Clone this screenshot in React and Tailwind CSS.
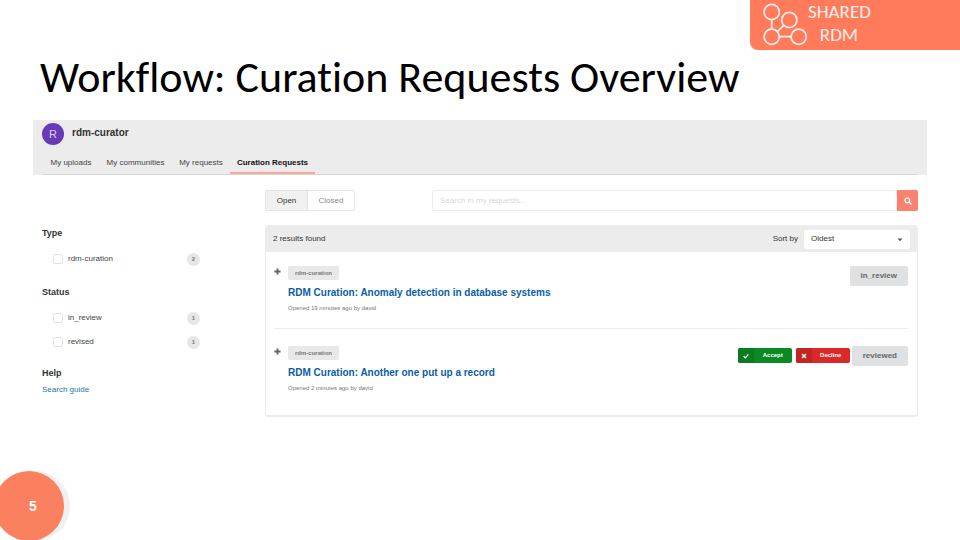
import React from "react";

const TABS = [
  { label: "My uploads", width: "w-14" },
  { label: "My communities", width: "w-[73px]" },
  { label: "My requests", width: "w-[58px]" },
  { label: "Curation Requests", width: "w-[85px]", active: true },
];

const REQUESTS = [
  {
    title: "RDM Curation: Anomaly detection in database systems",
    opened: "Opened 19 minutes ago by david",
    status: "in_review",
  },
  {
    title: "RDM Curation: Another one put up a record",
    opened: "Opened 2 minutes ago by david",
    status: "reviewed",
    actions: true,
  },
];

function Logo() {
  return (
    <div className="flex h-[50px] w-[210px] rounded-bl-lg bg-[#ff7b5c] pl-3 text-white">
      <svg viewBox="0 0 46 50" className="h-[50px] w-[46px]" fill="none" stroke="#ffeee9" strokeWidth="1.7" aria-hidden="true">
        <circle cx="9.7" cy="12" r="7.6" />
        <circle cx="27.3" cy="20" r="7.6" />
        <circle cx="9.7" cy="36.7" r="7.6" />
        <circle cx="36.7" cy="36.7" r="7.6" />
        <path d="M9.7 19.6v9.5M15.4 31.6l6.1-6M17.3 36.7h11.8" />
      </svg>
      <p className="w-[62px] text-center font-['Carlito','Open_Sans',sans-serif] text-[19px] leading-[23px] text-[#ffeee9]">
        SHARED RDM
      </p>
    </div>
  );
}

function Facet({ label, count }) {
  return (
    <label className="flex h-6 items-center text-[8px] text-[#444]">
      <input
        type="checkbox"
        className="ml-[11px] size-[10px] appearance-none rounded-[2px] border border-[#e2e2e2] bg-white"
      />
      <span className="ml-[5px] flex-1">{label}</span>
      <span className="flex size-[13px] items-center justify-center rounded-full bg-[#e6e6e6] text-[6px] font-bold text-[#777]">
        {count}
      </span>
    </label>
  );
}

function Action({ label, tone, iconTone, path }) {
  return (
    <button type="button" className={"flex h-[15px] overflow-hidden rounded-[2px] text-[6px] font-bold text-white " + tone}>
      <span className={"flex h-full w-4 items-center justify-center " + iconTone}>
        <svg viewBox="0 0 8 8" className="size-1.5" fill="none" stroke="white" strokeWidth="1.7" aria-hidden="true">
          <path d={path} />
        </svg>
      </span>
      <span className="flex h-full w-[38px] items-center justify-center">{label}</span>
    </button>
  );
}

function Request({ title, opened, status, actions }) {
  return (
    <li className="flex items-start pt-[17px] pb-4 first:pt-[14px]">
      <button type="button" aria-label="Expand" className="mt-[2px] w-[14px]">
        <svg viewBox="0 0 8 8" className="size-[7px]" stroke="#666" strokeWidth="2.2" aria-hidden="true">
          <path d="M4 .5v7M.5 4h7" />
        </svg>
      </button>
      <div className="flex-1">
        <span className="flex h-[14px] w-[51px] items-center justify-center rounded-[2px] bg-[#e8e8e8] text-[6px] font-bold text-[#777]">
          rdm-curation
        </span>
        <h2 className="mt-1.5 text-[10px] leading-[14px] font-bold text-[#0860a8]">
          <a href="#request">{title}</a>
        </h2>
        <p className="mt-1 text-[6px] leading-[8px] text-[#777]">{opened}</p>
      </div>
      <div className="flex gap-0.5">
        {actions && (
          <div className="flex gap-1 pt-0.5">
            <Action label="Accept" tone="bg-[#0b8a24]" iconTone="bg-[#087c1f]" path="M.8 4.2l2.3 2.2L7.2 1.8" />
            <Action label="Decline" tone="bg-[#db2828]" iconTone="bg-[#c52424]" path="M1.3 1.3l5.4 5.4M6.7 1.3L1.3 6.7" />
          </div>
        )}
        <span className="flex h-5 items-center rounded-[2px] bg-[#e0e1e2] px-[11px] text-[8px] font-bold text-[#666]">
          {status}
        </span>
      </div>
    </li>
  );
}

export default function App() {
  return (
    <main className="flex min-h-screen flex-col overflow-hidden bg-white font-['Liberation_Sans',Arial,sans-serif] text-[#333]">
      <header>
        <div className="flex justify-end">
          <Logo />
        </div>
        <h1 className="pl-10 font-['Carlito','Lato',sans-serif] text-[44px] leading-[54px] text-black [font-variant-ligatures:none]">
          Workflow: Curation Requests Overview
        </h1>
      </header>

      <section className="mx-[33px] mt-4">
        <div className="bg-[#ececec] px-[9px] pt-[3px]">
          <div className="flex gap-2">
            <span className="flex size-[22px] items-center justify-center rounded-full bg-[#673ab7] text-[11px] text-[#e0d5f2]">R</span>
            <strong className="text-[10px] leading-[20px]">rdm-curator</strong>
          </div>
          <nav className="mt-1.5 flex border-b border-[#d6d6d6] pl-px">
            {TABS.map((t) => (
              <a
                key={t.label}
                href="#tab"
                className={
                  "h-[23px] text-center text-[8px] leading-[24px] whitespace-nowrap " +
                  t.width +
                  (t.active ? " border-b-2 border-[#fba696] font-bold text-[#111]" : " text-[#444]")
                }
              >
                {t.label}
              </a>
            ))}
          </nav>
        </div>

        <div className="flex px-[9px] pt-[15px]">
          <aside className="mr-[65px] w-[158px] pt-9">
            <h3 className="text-[9px] leading-[14px] font-bold">Type</h3>
            <div className="mt-[7px]">
              <Facet label="rdm-curation" count="2" />
            </div>
            <h3 className="mt-[14px] text-[9px] leading-[14px] font-bold">Status</h3>
            <div className="mt-[7px]">
              <Facet label="in_review" count="1" />
              <Facet label="revised" count="1" />
            </div>
            <h3 className="mt-3 text-[9px] leading-[14px] font-bold">Help</h3>
            <a href="#guide" className="mt-1 block text-[8px] leading-[12px] text-[#2277b5]">Search guide</a>
          </aside>

          <div className="flex-1">
            <div className="flex h-[21px]">
              <div className="mr-[77px] flex w-[90px] overflow-hidden rounded-[2px] border border-[#e4e4e4] text-[8px]">
                <button type="button" className="w-[42px] border-r border-[#e4e4e4] bg-[#f1f1f1] text-[#333]">Open</button>
                <button type="button" className="flex-1 text-[#888]">Closed</button>
              </div>
              <form className="flex flex-1">
                <input
                  type="search"
                  aria-label="Search in my requests"
                  placeholder="Search in my requests..."
                  className="flex-1 rounded-l-[2px] border border-[#ececec] px-[7px] text-[8px] placeholder:text-[#d8d8d8]"
                />
                <button type="button" aria-label="Search" className="flex w-[21px] items-center justify-center rounded-r-[2px] bg-[#fb8271]">
                  <svg viewBox="0 0 8 8" className="size-2" fill="none" stroke="white" strokeWidth="1.3" aria-hidden="true">
                    <circle cx="3.3" cy="3.3" r="2.4" />
                    <path d="M5 5l2.5 2.5" />
                  </svg>
                </button>
              </form>
            </div>

            <div className="mt-[14px] rounded-[3px] border border-b-2 border-[#ececec]">
              <div className="flex h-[26px] items-center bg-[#ececec] px-[7px] text-[8px]">
                <span className="flex-1">2 results found</span>
                <label htmlFor="sort" className="mr-1.5">Sort by</label>
                <div className="relative">
                  <select
                    id="sort"
                    className="block h-[19px] w-[106px] appearance-none rounded-[2px] bg-white px-[7px] text-[8px]"
                  >
                    <option>Oldest</option>
                  </select>
                  <svg viewBox="0 0 6 4" className="pointer-events-none absolute top-2 right-[7px] h-1 w-1.5" fill="#555" aria-hidden="true">
                    <path d="M.6.5h4.8L3 3.3z" />
                  </svg>
                </div>
              </div>
              <ul className="mr-[9px] mb-[7px] ml-2 divide-y divide-[#ededed]">
                {REQUESTS.map((r) => (
                  <Request key={r.title} {...r} />
                ))}
              </ul>
            </div>
          </div>
        </div>
      </section>

      <footer className="mt-auto -mb-px">
        <div className="-ml-1.5 flex size-[70px] items-center justify-center rounded-full bg-[#fb8060] pl-2 text-[14px] font-bold text-white shadow-[6px_0_0_#f0f0f0]">
          5
        </div>
      </footer>
    </main>
  );
}
